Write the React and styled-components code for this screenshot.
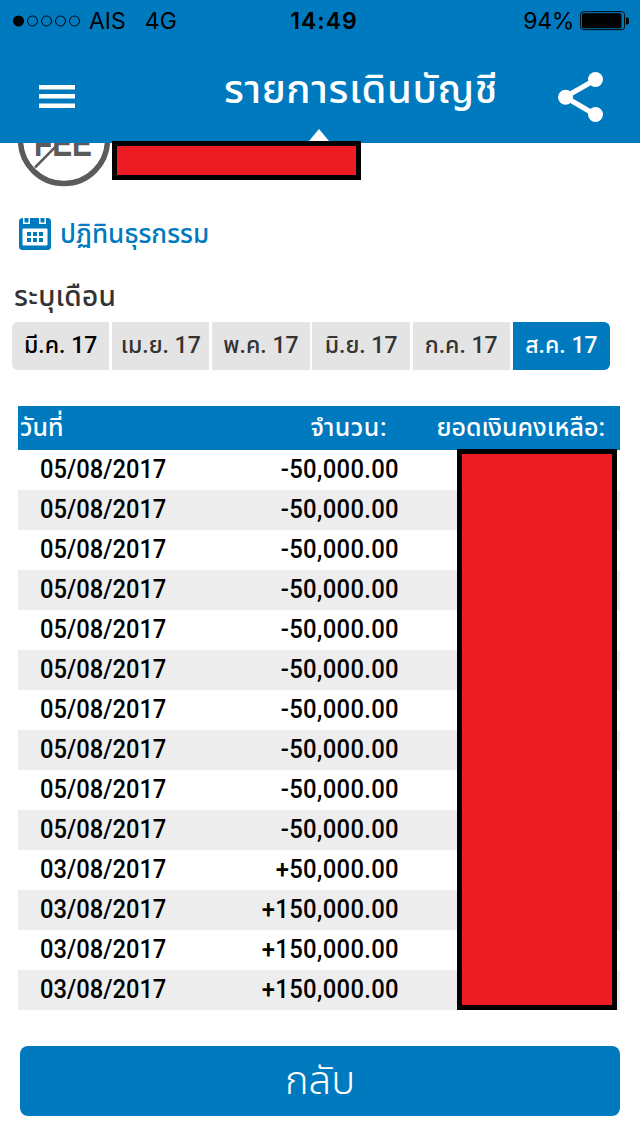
import React from "react";
import styled, { createGlobalStyle } from "styled-components";

const BLUE = "#007abf";
const THAI = `Roboto, "Noto Sans Thai", "Noto Sans", "Liberation Sans", sans-serif`;

const GlobalStyle = createGlobalStyle`
  * { box-sizing: border-box; }
  body { margin: 0; background: #fff; }
`;

const Screen = styled.div`
  width: 640px;
  height: 1136px;
  overflow: hidden;
  background: #fff;
  color: #000;
  font-family: ${THAI};
`;

const Header = styled.header`
  position: relative;
  height: 143px;
  background: ${BLUE};
`;

const StatusBar = styled.div`
  display: grid;
  grid-template-columns: 1fr auto 1fr;
  align-items: center;
  height: 40px;
  padding: 1px 10px 0 13px;
  font: 400 23px/40px Inter, sans-serif;
`;

const Carrier = styled.div`
  display: flex;
  align-items: center;
`;

const Signal = styled.svg`
  width: 68px;
  height: 12px;
  margin-right: 8px;
`;

const Label = styled.span`
  display: inline-block;
  white-space: pre;
  letter-spacing: ${(p) => p.$spacing || 0}px;
  margin-left: ${(p) => p.$gap || 0}px;
`;

const Clock = styled.span`
  padding-left: 5px;
  font-weight: 600;
  letter-spacing: 1px;
`;

const Power = styled.div`
  display: flex;
  align-items: center;
  justify-content: flex-end;
`;

const Battery = styled.svg`
  width: 50px;
  height: 20px;
  margin-left: 6px;
`;

const NavBar = styled.div`
  display: grid;
  grid-template-columns: 200px 1fr 110px;
  height: 103px;
`;

const MenuIcon = styled.svg`
  width: 36px;
  height: 24px;
  margin: 45px 0 0 39px;
`;

const Title = styled.h1`
  margin: 22px 0 0 24px;
  color: #fff;
  font-size: 40px;
  font-weight: 500;
  line-height: 56px;
  white-space: nowrap;
  letter-spacing: 0.6px;
`;

const ShareIcon = styled.svg`
  width: 46px;
  height: 50px;
  margin: 32px 0 0 27px;
`;

const Pointer = styled.svg`
  position: absolute;
  left: 309px;
  bottom: 2px;
  width: 20px;
  height: 12px;
`;

const Account = styled.section`
  display: flex;
  align-items: flex-start;
  height: 65px;
  padding-left: 17px;
`;

const FeeBadge = styled.svg`
  width: 95px;
  height: 44px;
  overflow: hidden;
`;

const Redaction = styled.div`
  position: relative;
  z-index: 1;
  width: ${(p) => p.$w}px;
  height: ${(p) => p.$h}px;
  margin-top: ${(p) => p.$top || 0}px;
  border: 5px solid #000;
  background: #ed1c24;
`;

const CalendarLink = styled.div`
  display: flex;
  align-items: center;
  height: 52px;
  padding-left: 19px;
  gap: 9px;
  color: ${BLUE};
  font-size: 26px;
  font-weight: 500;
  line-height: 50px;
`;

const CalendarIcon = styled.svg`
  width: 32px;
  height: 32px;
`;

const MonthHeading = styled.h2`
  height: 62px;
  margin: 0;
  padding: 12px 0 0 14px;
  color: #333;
  font-size: 28px;
  font-weight: 500;
  line-height: 50px;
  letter-spacing: 0.3px;
`;

const Months = styled.div`
  display: flex;
  gap: 2.8px;
  width: 598px;
  height: 48px;
  margin-left: 12px;
  overflow: hidden;
  border-radius: 6px;
`;

const Month = styled.div`
  flex: 1;
  background: ${(p) => (p.$active ? BLUE : "#e4e4e4")};
  color: ${(p) => (p.$active ? "#fff" : p.$strong ? "#000" : "#333")};
  font-size: 23px;
  font-weight: 500;
  line-height: 47px;
  text-align: center;
  white-space: nowrap;
`;

const Statement = styled.section`
  position: relative;
  width: 602px;
  margin: 36px 0 0 18px;
`;

const HeadRow = styled.div`
  display: grid;
  grid-template-columns: 189px 180px 1fr;
  height: 44px;
  background: ${BLUE};
  color: #fff;
  font-size: 25px;
  font-weight: 500;
  line-height: 43px;
  white-space: nowrap;
`;

const HeadCell = styled.div`
  padding-left: ${(p) => p.$left || 0}px;
  padding-right: ${(p) => p.$right || 0}px;
  text-align: ${(p) => p.$align || "left"};
  letter-spacing: ${(p) => p.$spacing || 0}px;
`;

const Row = styled.div`
  display: grid;
  grid-template-columns: 189px 192px 1fr;
  height: 40px;
  background: ${(p) => (p.$shaded ? "#ededed" : "#fff")};
  font-size: 25.5px;
  font-weight: 500;
  line-height: 38px;
`;

const DateCell = styled.div`
  padding-left: 22px;
  transform: scaleX(0.93);
  transform-origin: 22px 50%;
`;

const AmountCell = styled.div`
  text-align: right;
  letter-spacing: 0.35px;
  transform: scaleX(0.935);
  transform-origin: 100% 50%;
`;

const BalanceCover = styled.div`
  position: absolute;
  left: 439px;
  top: 43px;
`;

const BackButton = styled.button`
  display: block;
  width: 600px;
  height: 70px;
  margin: 36px 0 0 20px;
  padding: 0;
  border: 0;
  border-radius: 8px;
  background: ${BLUE};
  color: #fff;
  font: 300 40px/68px ${THAI};
`;

const months = ["มี.ค. 17", "เม.ย. 17", "พ.ค. 17", "มิ.ย. 17", "ก.ค. 17", "ส.ค. 17"];

const entries = [
  ...Array.from({ length: 10 }, () => ["05/08/2017", "-50,000.00"]),
  ["03/08/2017", "+50,000.00"],
  ["03/08/2017", "+150,000.00"],
  ["03/08/2017", "+150,000.00"],
  ["03/08/2017", "+150,000.00"],
];

export default function App() {
  return (
    <Screen>
      <GlobalStyle />
      <Header>
        <StatusBar>
          <Carrier>
            <Signal viewBox="0 0 68 12">
              <circle cx="5.5" cy="6" r="5.5" />
              {[19.5, 33.5, 47.5, 61.5].map((x) => (
                <circle key={x} cx={x} cy="6" r="5" fill="none" stroke="#000" />
              ))}
            </Signal>
            <Label>AIS</Label>
            <Label $gap={19}>4G</Label>
          </Carrier>
          <Clock>14:49</Clock>
          <Power>
            <Label $spacing={-0.3}>94%</Label>
            <Battery viewBox="0 0 50 20">
              <rect x="0.6" y="0.7" width="44" height="18" rx="3" fill="none" stroke="#000" />
              <rect x="2" y="2.3" width="39.5" height="15" rx="1.5" />
              <path d="M46 6.5h1a2 2 0 0 1 2 2v3a2 2 0 0 1-2 2h-1z" />
            </Battery>
          </Power>
        </StatusBar>
        <NavBar>
          <MenuIcon viewBox="0 0 36 24" fill="#fff">
            <path d="M0 0h36v4.5H0zM0 9h36v4.5H0zM0 18.5h36V23H0z" />
          </MenuIcon>
          <Title>รายการเดินบัญชี</Title>
          <ShareIcon viewBox="0 0 46 50" fill="#fff">
            <path d="M38 8L8 25l30 17.5" fill="none" stroke="#fff" strokeWidth="5" />
            <circle cx="38.5" cy="7.5" r="7.5" />
            <circle cx="8.5" cy="25.3" r="7.5" />
            <circle cx="38.5" cy="42.5" r="7.5" />
          </ShareIcon>
        </NavBar>
        <Pointer viewBox="0 0 20 12">
          <path d="M10 0l10 12H0z" fill="#fff" />
        </Pointer>
      </Header>

      <Account>
        <FeeBadge viewBox="0 0 95 44">
          <circle cx="47" cy="-3" r="43.5" fill="none" stroke="#5b5b5b" strokeWidth="5.5" />
          <text
            x="17"
            y="12.7"
            fill="#5b5b5b"
            fontFamily="Liberation Sans, sans-serif"
            fontWeight="700"
            fontSize="37"
            textLength="58"
            lengthAdjust="spacingAndGlyphs"
          >
            FEE
          </text>
          <path d="M18 24.5L52-10" stroke="#5b5b5b" strokeWidth="2.5" />
        </FeeBadge>
        <Redaction $w={249} $h={39} $top={-2} />
      </Account>

      <CalendarLink>
        <CalendarIcon viewBox="0 0 32 32">
          <rect width="32" height="32" rx="3.5" fill={BLUE} />
          <path d="M4 0h7v6H4zM20 0h7v6h-7z" fill="#fff" />
          <path d="M5.5 0h4v4.5h-4zM21.5 0h4v4.5h-4z" fill={BLUE} />
          <rect x="3.5" y="10.5" width="25" height="17" rx="1" fill="#fff" />
          <path
            d="M8 14h4v4H8zM14 14h4v4h-4zM20 14h4v4h-4zM8 20h4v4H8zM14 20h4v4h-4zM20 20h4v4h-4z"
            fill={BLUE}
          />
        </CalendarIcon>
        <Label>ปฏิทินธุรกรรม</Label>
      </CalendarLink>

      <MonthHeading>ระบุเดือน</MonthHeading>
      <Months>
        {months.map((m, i) => (
          <Month key={m} $strong={i === 0} $active={i === 5}>
            <Label>{m}</Label>
          </Month>
        ))}
      </Months>

      <Statement>
        <HeadRow>
          <HeadCell $left={2}>วันที่</HeadCell>
          <HeadCell $align="right" $spacing={0.5}>จำนวน:</HeadCell>
          <HeadCell $align="right" $right={15}>ยอดเงินคงเหลือ:</HeadCell>
        </HeadRow>
        {entries.map(([date, amount], i) => (
          <Row key={i} $shaded={i % 2 === 1}>
            <DateCell>{date}</DateCell>
            <AmountCell>{amount}</AmountCell>
          </Row>
        ))}
        <BalanceCover>
          <Redaction $w={160} $h={561} />
        </BalanceCover>
      </Statement>

      <BackButton>กลับ</BackButton>
    </Screen>
  );
}
